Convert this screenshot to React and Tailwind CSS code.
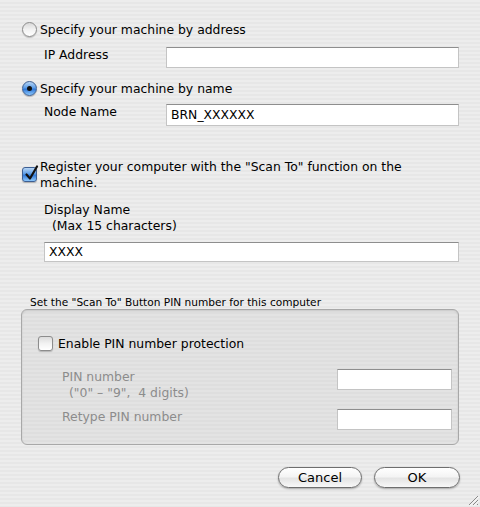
import React from "react";

function Radio({ checked }) {
  return checked ? (
    <div className="w-[15px] h-[15px] rounded-full border border-[#3d5f93] bg-[linear-gradient(to_bottom,#b7d6f6_0%,#5c9ce6_45%,#2f78d8_55%,#8cc6fa_100%)] flex items-center justify-center shadow-[0_1px_1px_rgba(0,0,0,0.25)]">
      <div className="w-[5px] h-[5px] rounded-full bg-[#111]" />
    </div>
  ) : (
    <div className="w-[15px] h-[15px] rounded-full border border-[#8c8c8c] bg-[linear-gradient(to_bottom,#d9d9d9_0%,#f2f2f2_50%,#ffffff_100%)] shadow-[0_1px_1px_rgba(0,0,0,0.2)]" />
  );
}

function Check({ checked }) {
  return checked ? (
    <div className="relative w-[15px] h-[15px] rounded-[3px] border border-[#3d5f93] bg-[linear-gradient(to_bottom,#b7d6f6_0%,#5c9ce6_45%,#2f78d8_55%,#8cc6fa_100%)] shadow-[0_1px_1px_rgba(0,0,0,0.25)]">
      <svg className="absolute left-[1px] top-[-3px]" width="15" height="16" viewBox="0 0 15 16">
        <path d="M2.5 9.5 L6 13.5 L13 1.5" fill="none" stroke="#111" strokeWidth="2.2" strokeLinecap="round" strokeLinejoin="round" />
      </svg>
    </div>
  ) : (
    <div className="w-[15px] h-[15px] rounded-[3px] border border-[#8c8c8c] bg-[linear-gradient(to_bottom,#dcdcdc_0%,#f2f2f2_50%,#ffffff_100%)] shadow-[0_1px_1px_rgba(0,0,0,0.2)]" />
  );
}

function Input({ className = "", value = "" }) {
  return (
    <div
      className={
        "bg-white border border-[#c4c4c4] border-t-[#8e8e8e] flex items-center pl-[4px] text-black " +
        className
      }
    >
      {value}
    </div>
  );
}

function Button({ children, className = "" }) {
  return (
    <div
      className={
        "h-[21px] rounded-full border border-[#6e6e6e] bg-[linear-gradient(to_bottom,#ffffff_0%,#f4f4f4_45%,#e4e4e4_55%,#f8f8f8_100%)] shadow-[0_1px_2px_rgba(0,0,0,0.3)] flex items-center justify-center text-[13px] leading-none " +
        className
      }
    >
      {children}
    </div>
  );
}

export default function App() {
  return (
    <div className="relative w-[480px] h-[507px] overflow-hidden bg-[repeating-linear-gradient(to_bottom,#ededed_0px,#ededed_2px,#e7e7e7_2px,#e7e7e7_4px)] font-['DejaVu_Sans',sans-serif] text-[12.4px] text-black pt-[22px]">
      <div className="flex items-center ml-[22px] h-[15px] gap-[3px]">
        <Radio />
        <span className="leading-[16px]">Specify your machine by address</span>
      </div>

      <div className="flex items-start mt-[10px] ml-[44px]">
        <span className="w-[122px] leading-[16px]">IP Address</span>
        <Input className="w-[293px] h-[21px]" />
      </div>

      <div className="flex items-center ml-[22px] h-[15px] gap-[3px] mt-[13px]">
        <Radio checked />
        <span className="leading-[16px]">Specify your machine by name</span>
      </div>

      <div className="flex items-start mt-[8px] ml-[44px]">
        <span className="w-[122px] leading-[16px]">Node Name</span>
        <Input className="w-[293px] h-[22px]" value="BRN_XXXXXX" />
      </div>

      <div className="flex items-start ml-[22px] mt-[33px] gap-[3px]">
        <div className="mt-[8px]">
          <Check checked />
        </div>
        <span className="leading-[16px]">
          Register your computer with the "Scan To" function on the
          <br />
          machine.
        </span>
      </div>

      <div className="ml-[44px] mt-[11px] leading-[16px]">Display Name</div>
      <div className="ml-[52px] leading-[16px]">(Max 15 characters)</div>
      <Input className="ml-[44px] mt-[8px] w-[415px] h-[20px]" value="XXXX" />

      <div className="ml-[30px] mt-[33px] text-[10.6px] leading-[14px]">
        Set the "Scan To" Button PIN number for this computer
      </div>

      <div className="ml-[21px] w-[438px] h-[136px] rounded-[6px] border border-[#a8a8a8] shadow-[inset_0_1px_2px_rgba(0,0,0,0.12)] bg-[repeating-linear-gradient(to_bottom,#e3e3e3_0px,#e3e3e3_2px,#dedede_2px,#dedede_4px)] pt-[26px]">
        <div className="flex items-center ml-[16px] h-[15px] gap-[5px]">
          <Check />
          <span className="leading-[16px]">Enable PIN number protection</span>
        </div>

        <div className="flex items-start justify-between mt-[18px] ml-[40px] mr-[6px]">
          <div className="text-[#8c8c8c] leading-[16px]">
            <div>PIN number</div>
            <div className="ml-[7px]">("0" – "9",&nbsp; 4 digits)</div>
          </div>
          <Input className="w-[115px] h-[21px]" />
        </div>

        <div className="flex items-start justify-between mt-[8px] ml-[40px] mr-[6px]">
          <div className="text-[#8c8c8c] leading-[16px]">Retype PIN number</div>
          <Input className="w-[115px] h-[21px]" />
        </div>
      </div>

      <div className="flex justify-end gap-[12px] mt-[22px] mr-[20px]">
        <Button className="w-[84px]">Cancel</Button>
        <Button className="w-[86px]">OK</Button>
      </div>

      <svg className="absolute right-[1px] bottom-[1px]" width="12" height="12" viewBox="0 0 12 12">
        <path d="M11 2 L2 11 M11 6 L6 11 M11 10 L10 11" stroke="#8a8a8a" strokeWidth="1" />
        <path d="M11.8 2.8 L2.8 11.8 M11.8 6.8 L6.8 11.8" stroke="#ffffff" strokeWidth="0.8" />
      </svg>
    </div>
  );
}
